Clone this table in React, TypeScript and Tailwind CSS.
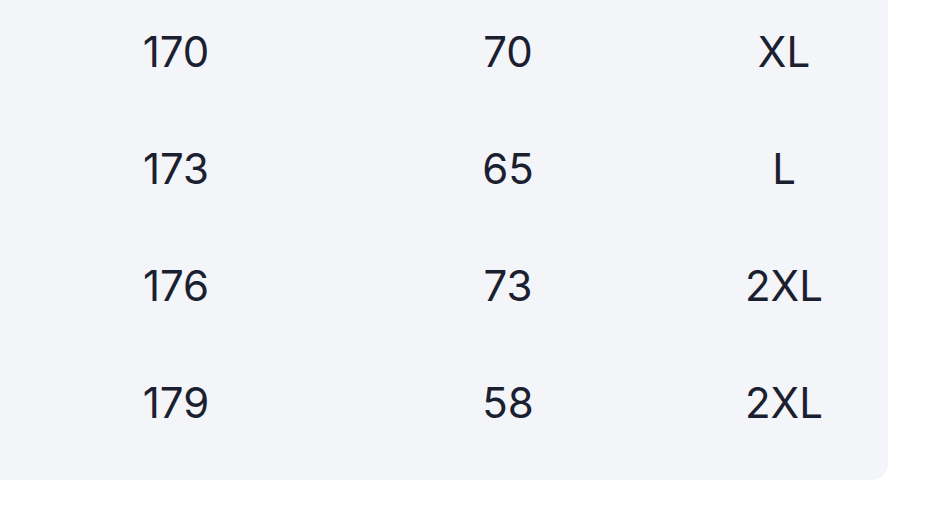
const rows = [
  ["170", "70", "XL"],
  ["173", "65", "L"],
  ["176", "73", "2XL"],
  ["179", "58", "2XL"],
];

export default function App() {
  return (
    <div className="w-[943px] h-[525px] bg-white overflow-hidden font-['Inter','Liberation_Sans',sans-serif]">
      <div className="w-[888px] h-[480px] bg-[#f3f5f8] rounded-br-[16px] overflow-hidden">
        <div className="-mt-[7px]">
          {rows.map((r, i) => (
            <div key={i} className="grid grid-cols-[352px_312px_1fr] h-[117px] items-center text-[42px] text-[#1b2030] leading-none">
              <div className="text-center">{r[0]}</div>
              <div className="text-center">{r[1]}</div>
              <div className="text-center pl-[16px]">{r[2]}</div>
            </div>
          ))}
        </div>
      </div>
    </div>
  );
}
